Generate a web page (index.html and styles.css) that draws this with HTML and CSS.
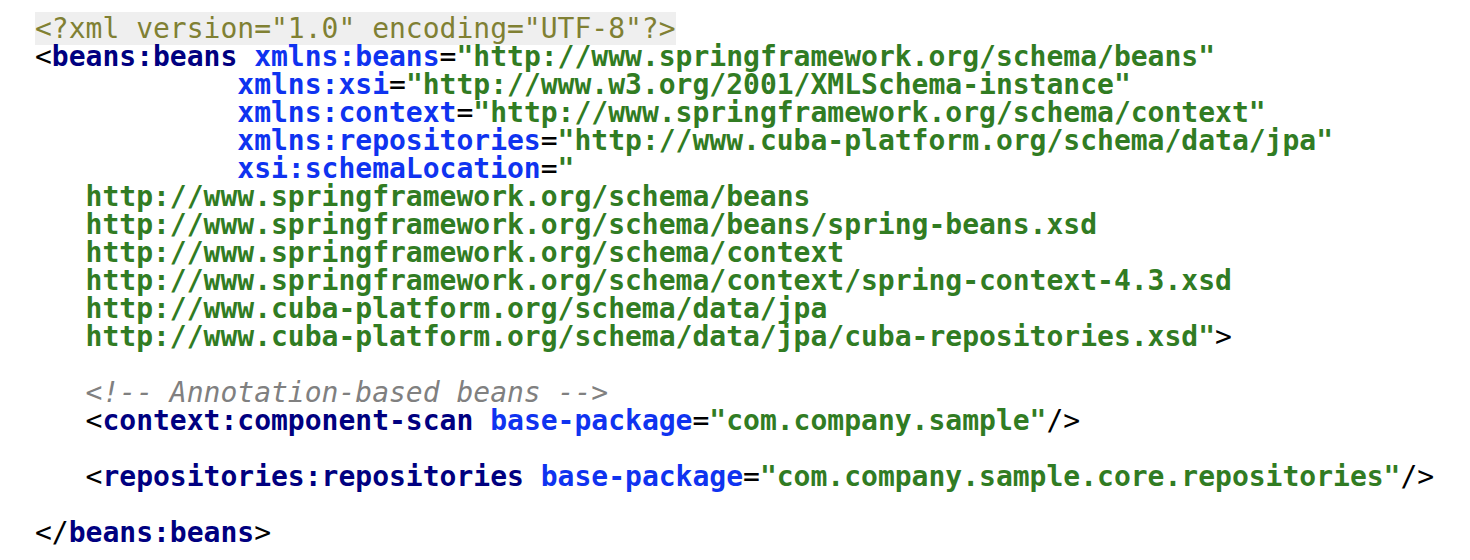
FILE: index.html
```html
<!DOCTYPE html>
<html>
<head>
<meta charset="UTF-8">
<link rel="stylesheet" href="styles.css">
</head>
<body>
<pre class="code"><span class="decl">&lt;?xml version="1.0" encoding="UTF-8"?&gt;</span>
<span class="p">&lt;</span><span class="tag">beans:beans</span> <span class="attr">xmlns:beans</span><span class="p">=</span><span class="val">"http://www.springframework.org/schema/beans"</span>
            <span class="attr">xmlns:xsi</span><span class="p">=</span><span class="val">"http://www.w3.org/2001/XMLSchema-instance"</span>
            <span class="attr">xmlns:context</span><span class="p">=</span><span class="val">"http://www.springframework.org/schema/context"</span>
            <span class="attr">xmlns:repositories</span><span class="p">=</span><span class="val">"http://www.cuba-platform.org/schema/data/jpa"</span>
            <span class="attr">xsi:schemaLocation</span><span class="p">=</span><span class="val">"
   http://www.springframework.org/schema/beans
   http://www.springframework.org/schema/beans/spring-beans.xsd
   http://www.springframework.org/schema/context
   http://www.springframework.org/schema/context/spring-context-4.3.xsd
   http://www.cuba-platform.org/schema/data/jpa
   http://www.cuba-platform.org/schema/data/jpa/cuba-repositories.xsd"</span><span class="p">&gt;</span>

   <span class="comment">&lt;!-- Annotation-based beans --&gt;</span>
   <span class="p">&lt;</span><span class="tag">context:component-scan</span> <span class="attr">base-package</span><span class="p">=</span><span class="val">"com.company.sample"</span><span class="p">/&gt;</span>

   <span class="p">&lt;</span><span class="tag">repositories:repositories</span> <span class="attr">base-package</span><span class="p">=</span><span class="val">"com.company.sample.core.repositories"</span><span class="p">/&gt;</span>

<span class="p">&lt;/</span><span class="tag">beans:beans</span><span class="p">&gt;</span></pre>
</body>
</html>
```
FILE: styles.css
```css
html, body {
  margin: 0;
  padding: 0;
  background: #ffffff;
}

.code {
  margin: 0;
  padding: 15px 0 0 35px;
  font-family: "DejaVu Sans Mono", monospace;
  font-size: 28px;
  line-height: 28px;
  white-space: pre;
  color: #000000;
  font-weight: normal;
}

.decl {
  color: #808033;
  background: #efefef;
}

.p {
  color: #000000;
}

.tag {
  color: #000080;
  font-weight: bold;
}

.attr {
  color: #0f33f0;
  font-weight: bold;
}

.val {
  color: #317c23;
  font-weight: bold;
}

.comment {
  color: #808080;
  font-style: italic;
}
```
